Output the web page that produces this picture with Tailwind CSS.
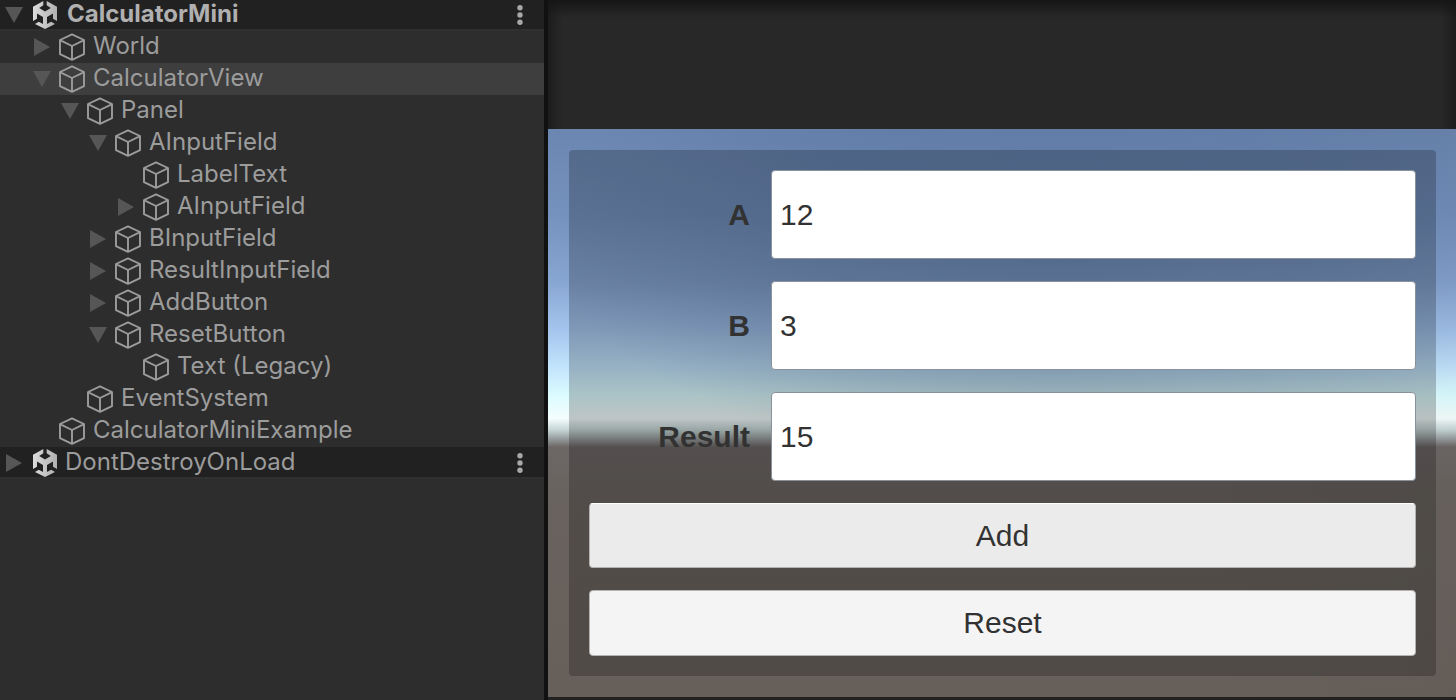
<!DOCTYPE html>
<html lang="en">
<head>
<meta charset="utf-8">
<meta name="viewport" content="width=device-width, initial-scale=1">
<title>CalculatorMini</title>
<script src="https://cdn.jsdelivr.net/npm/@tailwindcss/browser@4"></script>
</head>
<body class="flex min-h-screen bg-[#111111]">

<!-- Shared icon shapes -->
<svg class="absolute size-0" aria-hidden="true">
  <linearGradient id="shade"><stop offset="0" stop-color="#dcdcdc"/><stop offset="1" stop-color="#b0b0b0"/></linearGradient>
  <symbol id="cube" viewBox="0 0 28 28">
    <path d="M14 1.400 26 7v14.200L14 26.800 2 21.200V7zM2 7.200 14 13 26 7.200M14 13v13.800" fill="none" stroke="currentColor" stroke-width="1.900" stroke-linejoin="round"/>
  </symbol>
  <symbol id="scene" viewBox="0 0 24 28">
    <path fill="url(#shade)" fill-rule="evenodd" d="M10.300 0 0 5.800V20l4-2.300v-5.200l6 3.400v7.200l-4.200-2.400-3.800 2.200L12 28l10-5.100-3.800-2.200-4.200 2.400v-7.200l6-3.400v5.200l4 2.300V5.800L13.700 0v4.200l4.100 2.900L12 10.600 6.200 7.100l4.100-2.900z"/>
  </symbol>
  <symbol id="open" viewBox="0 0 18 16"><path d="M0 0h18L9 16z" fill="#565656"/></symbol>
  <symbol id="closed" viewBox="0 0 16 18"><path d="M0 0v18l16-9z" fill="#565656"/></symbol>
  <symbol id="dots" viewBox="0 0 6 20"><g fill="#a8a8a8"><circle cx="3" cy="2.700" r="2.700"/><circle cx="3" cy="10" r="2.700"/><circle cx="3" cy="17.300" r="2.700"/></g></symbol>
</svg>

<nav aria-label="Hierarchy" class="w-[544px] shrink-0 bg-[#2d2d2d] font-[Inter,sans-serif] text-2xl leading-7 text-[#9c9c9c]">
  <ul role="tree">
    <li role="treeitem" aria-expanded="true" class="flex h-[31px] items-center border-b-2 border-[#303030] bg-[#212121]">
      <button aria-label="Collapse CalculatorMini" class="flex w-7 shrink-0 justify-center"><svg class="h-4 w-[18px]"><use href="#open"/></svg></button>
      <span class="flex w-8 shrink-0 justify-center pl-0.5"><svg class="h-7 w-6"><use href="#scene"/></svg></span>
      <span class="grow pb-0.5 pl-[7px] font-bold text-[#b0b0b0]">CalculatorMini</span>
      <button aria-label="CalculatorMini menu" class="mr-[21px]"><svg class="h-5 w-1.5"><use href="#dots"/></svg></button>
    </li>
    <li role="treeitem" aria-expanded="false" class="flex h-8 items-center pl-7">
      <button aria-label="Expand World" class="flex w-7 shrink-0 justify-center"><svg class="h-[18px] w-4"><use href="#closed"/></svg></button>
      <span class="flex w-8 shrink-0 justify-center"><svg class="size-7"><use href="#cube"/></svg></span>
      <span class="pb-0.5 pl-[5px]">World</span>
    </li>
    <li role="treeitem" aria-expanded="true" aria-selected="true" class="flex h-8 items-center bg-[#3e3e3e] pl-7">
      <button aria-label="Collapse CalculatorView" class="flex w-7 shrink-0 justify-center"><svg class="h-4 w-[18px]"><use href="#open"/></svg></button>
      <span class="flex w-8 shrink-0 justify-center"><svg class="size-7"><use href="#cube"/></svg></span>
      <span class="pb-0.5 pl-[5px]">CalculatorView</span>
    </li>
    <li role="treeitem" aria-expanded="true" class="flex h-8 items-center pl-14">
      <button aria-label="Collapse Panel" class="flex w-7 shrink-0 justify-center"><svg class="h-4 w-[18px]"><use href="#open"/></svg></button>
      <span class="flex w-8 shrink-0 justify-center"><svg class="size-7"><use href="#cube"/></svg></span>
      <span class="pb-0.5 pl-[5px]">Panel</span>
    </li>
    <li role="treeitem" aria-expanded="true" class="flex h-8 items-center pl-21">
      <button aria-label="Collapse AInputField" class="flex w-7 shrink-0 justify-center"><svg class="h-4 w-[18px]"><use href="#open"/></svg></button>
      <span class="flex w-8 shrink-0 justify-center"><svg class="size-7"><use href="#cube"/></svg></span>
      <span class="pb-0.5 pl-[5px]">AInputField</span>
    </li>
    <li role="treeitem" class="flex h-8 items-center pl-35">
      <span class="flex w-8 shrink-0 justify-center"><svg class="size-7"><use href="#cube"/></svg></span>
      <span class="pb-0.5 pl-[5px]">LabelText</span>
    </li>
    <li role="treeitem" aria-expanded="false" class="flex h-8 items-center pl-28">
      <button aria-label="Expand AInputField" class="flex w-7 shrink-0 justify-center"><svg class="h-[18px] w-4"><use href="#closed"/></svg></button>
      <span class="flex w-8 shrink-0 justify-center"><svg class="size-7"><use href="#cube"/></svg></span>
      <span class="pb-0.5 pl-[5px]">AInputField</span>
    </li>
    <li role="treeitem" aria-expanded="false" class="flex h-8 items-center pl-21">
      <button aria-label="Expand BInputField" class="flex w-7 shrink-0 justify-center"><svg class="h-[18px] w-4"><use href="#closed"/></svg></button>
      <span class="flex w-8 shrink-0 justify-center"><svg class="size-7"><use href="#cube"/></svg></span>
      <span class="pb-0.5 pl-[5px]">BInputField</span>
    </li>
    <li role="treeitem" aria-expanded="false" class="flex h-8 items-center pl-21">
      <button aria-label="Expand ResultInputField" class="flex w-7 shrink-0 justify-center"><svg class="h-[18px] w-4"><use href="#closed"/></svg></button>
      <span class="flex w-8 shrink-0 justify-center"><svg class="size-7"><use href="#cube"/></svg></span>
      <span class="pb-0.5 pl-[5px]">ResultInputField</span>
    </li>
    <li role="treeitem" aria-expanded="false" class="flex h-8 items-center pl-21">
      <button aria-label="Expand AddButton" class="flex w-7 shrink-0 justify-center"><svg class="h-[18px] w-4"><use href="#closed"/></svg></button>
      <span class="flex w-8 shrink-0 justify-center"><svg class="size-7"><use href="#cube"/></svg></span>
      <span class="pb-0.5 pl-[5px]">AddButton</span>
    </li>
    <li role="treeitem" aria-expanded="true" class="flex h-8 items-center pl-21">
      <button aria-label="Collapse ResetButton" class="flex w-7 shrink-0 justify-center"><svg class="h-4 w-[18px]"><use href="#open"/></svg></button>
      <span class="flex w-8 shrink-0 justify-center"><svg class="size-7"><use href="#cube"/></svg></span>
      <span class="pb-0.5 pl-[5px]">ResetButton</span>
    </li>
    <li role="treeitem" class="flex h-8 items-center pl-35">
      <span class="flex w-8 shrink-0 justify-center"><svg class="size-7"><use href="#cube"/></svg></span>
      <span class="pb-0.5 pl-[5px]">Text (Legacy)</span>
    </li>
    <li role="treeitem" class="flex h-8 items-center pl-21">
      <span class="flex w-8 shrink-0 justify-center"><svg class="size-7"><use href="#cube"/></svg></span>
      <span class="pb-0.5 pl-[5px]">EventSystem</span>
    </li>
    <li role="treeitem" class="flex h-8 items-center pl-14">
      <span class="flex w-8 shrink-0 justify-center"><svg class="size-7"><use href="#cube"/></svg></span>
      <span class="pb-0.5 pl-[5px]">CalculatorMiniExample</span>
    </li>
    <li role="treeitem" aria-expanded="false" class="flex h-8 items-center border-b-2 border-[#303030] bg-[#212121] pt-0.5">
      <button aria-label="Expand DontDestroyOnLoad" class="flex w-7 shrink-0 justify-center"><svg class="h-[18px] w-4"><use href="#closed"/></svg></button>
      <span class="flex w-8 shrink-0 justify-center pl-0.5"><svg class="h-7 w-6"><use href="#scene"/></svg></span>
      <span class="grow pb-0.5 pl-[5px]">DontDestroyOnLoad</span>
      <button aria-label="DontDestroyOnLoad menu" class="mr-[21px]"><svg class="h-5 w-1.5"><use href="#dots"/></svg></button>
    </li>
  </ul>
</nav>

<main class="ml-1 flex grow flex-col border-b-3 border-[#222222] bg-[#282828] font-['Liberation_Sans',Arial,sans-serif] text-3xl text-[#323232]">
  <div class="min-h-[129px] grow bg-[linear-gradient(#161616,#16161600_18px),linear-gradient(to_right,#1c1c1c,#1c1c1c00_14px),linear-gradient(to_left,#1c1c1c,#1c1c1c00_14px)]"></div>
  <!-- Sky and ground behind the form -->
  <div class="bg-[linear-gradient(to_right,#00000000_70%,#00000008),radial-gradient(ellipse_56%_42%_at_56%_18%,#48649160,#48649140_50%,#48649100),linear-gradient(#6b86b0_0%,#7592be_15%,#88a6d2_27%,#a3c3ec_35%,#c2e4fc_42%,#dcfcff_47%,#f4fdfd_51%,#c4d4d4_53%,#6c6666_56%,#69635f_64%,#67605a_100%)] py-[21px] pr-5 pl-[21px]">
    <form class="flex flex-col gap-[22px] rounded bg-black/22 p-5">
      <div class="flex items-center gap-[21px]">
        <label for="a" class="w-[161px] shrink-0 text-right font-bold">A</label>
        <input id="a" type="text" value="12" class="h-[89px] w-full min-w-0 rounded border border-[#8b919b] bg-white px-2">
      </div>
      <div class="flex items-center gap-[21px]">
        <label for="b" class="w-[161px] shrink-0 text-right font-bold">B</label>
        <input id="b" type="text" value="3" class="h-[89px] w-full min-w-0 rounded border border-[#8b919b] bg-white px-2">
      </div>
      <div class="flex items-center gap-[21px]">
        <label for="result" class="w-[161px] shrink-0 text-right font-bold">Result</label>
        <input id="result" type="text" value="15" class="h-[89px] w-full min-w-0 rounded border border-[#8b919b] bg-white px-2">
      </div>
      <button type="button" class="h-[65px] rounded border border-[#b5b2b0] border-t-white bg-[#ebebeb]">Add</button>
      <button type="button" class="h-[66px] rounded border border-[#b5b2b0] bg-[#f4f4f4]">Reset</button>
    </form>
  </div>
</main>
</body>
</html>
